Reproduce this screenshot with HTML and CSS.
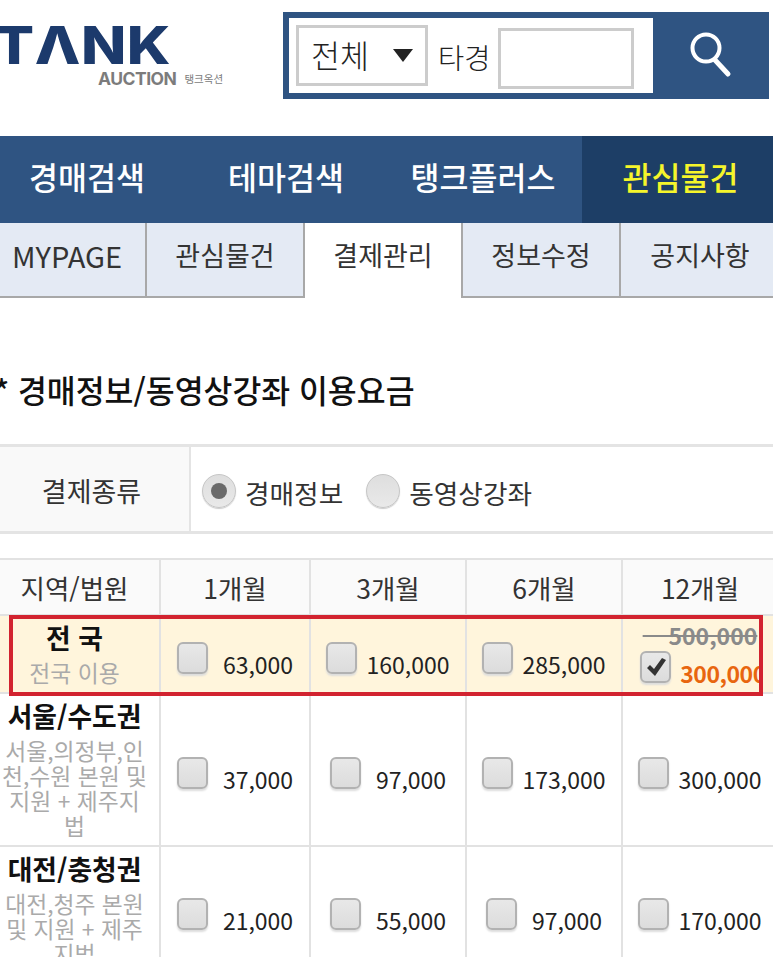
FILE: index.html
```html
<!DOCTYPE html>
<html lang="ko">
<head>
    <meta charset="UTF-8">
    <meta name="viewport" content="width=device-width, initial-scale=1.0">
    <title>결제관리 - 탱크옥션</title>
    <link rel="stylesheet" href="styles.css">
</head>
<body>
<div class="page">
    <header class="top">
        <a class="logo">
            <span class="logo-name">TΛNK</span>
            <span class="logo-sub"><b>AUCTION</b><i>탱크옥션</i></span>
        </a>
        <form class="search">
            <div class="search-fields">
                <div class="select">전체<span class="arrow"></span></div>
                <label class="search-label">타경</label>
                <input class="search-input" type="text">
            </div>
            <div class="search-btn">
                <svg width="44" height="48" viewBox="0 0 44 48" fill="none" stroke="#fff" stroke-width="4">
                    <circle cx="17" cy="17" r="13.5"/>
                    <path d="M26 29 L39 43" stroke-width="5" stroke-linecap="round"/>
                </svg>
            </div>
        </form>
    </header>

    <nav class="nav">
        <a class="nav-item n1">경매검색</a>
        <a class="nav-item n2">테마검색</a>
        <a class="nav-item n3">탱크플러스</a>
        <a class="nav-item n4 on">관심물건</a>
    </nav>

    <div class="tabs">
        <a class="tab tab-en">MYPAGE</a>
        <a class="tab">관심물건</a>
        <a class="tab active">결제관리</a>
        <a class="tab">정보수정</a>
        <a class="tab">공지사항</a>
    </div>

    <h2 class="title">* 경매정보/동영상강좌 이용요금</h2>

    <div class="pay-type">
        <div class="pay-label">결제종류</div>
        <div class="pay-options">
            <span class="radio checked"></span><span class="radio-text">경매정보</span>
            <span class="radio"></span><span class="radio-text">동영상강좌</span>
        </div>
    </div>

    <div class="price-wrap">
        <table class="price">
            <colgroup>
                <col class="c-area"><col class="c1"><col class="c2"><col class="c2"><col class="c2">
            </colgroup>
            <thead>
                <tr>
                    <th>지역/법원</th><th>1개월</th><th>3개월</th><th>6개월</th><th>12개월</th>
                </tr>
            </thead>
            <tbody>
                <tr class="hl">
                    <td class="area"><strong>전 국</strong><p>전국 이용</p></td>
                    <td><span class="chk"></span><span class="amt short">63,000</span></td>
                    <td><span class="chk"></span><span class="amt">160,000</span></td>
                    <td><span class="chk"></span><span class="amt">285,000</span></td>
                    <td class="sale">
                        <s class="old">&nbsp;&nbsp;&nbsp;&nbsp;500,000</s>
                        <span class="chk on">
                            <svg width="22" height="22" viewBox="0 0 22 22"><path d="M2 12 L5 9 L9 13 L17 2 L21 4 L10 20 Z" fill="#333"/></svg>
                        </span><span class="amt now">300,000</span>
                    </td>
                </tr>
                <tr>
                    <td class="area"><strong>서울/수도권</strong><p>서울,의정부,인천,수원 본원 및 지원 + 제주지법</p></td>
                    <td><span class="chk"></span><span class="amt short">37,000</span></td>
                    <td><span class="chk"></span><span class="amt short">97,000</span></td>
                    <td><span class="chk"></span><span class="amt">173,000</span></td>
                    <td><span class="chk"></span><span class="amt">300,000</span></td>
                </tr>
                <tr>
                    <td class="area"><strong>대전/충청권</strong><p>대전,청주 본원 및 지원 + 제주지법</p></td>
                    <td><span class="chk"></span><span class="amt short">21,000</span></td>
                    <td><span class="chk"></span><span class="amt short">55,000</span></td>
                    <td><span class="chk"></span><span class="amt short">97,000</span></td>
                    <td><span class="chk"></span><span class="amt">170,000</span></td>
                </tr>
            </tbody>
        </table>
        <div class="red-box"></div>
    </div>
</div>
</body>
</html>
```

FILE: styles.css
```css
* { box-sizing: border-box; }
html, body { margin: 0; padding: 0; }
body {
    font-family: "Noto Sans CJK KR", "Noto Sans", sans-serif;
    background: #fff;
    color: #333;
}
.page {
    width: 773px;
    height: 957px;
    overflow: hidden;
}

/* top */
.top {
    height: 136px;
    padding: 12px 4px 0 0;
    display: flex;
    justify-content: space-between;
    align-items: flex-start;
}
.logo { display: block; margin-left: -6px; padding-top: 11px; }
.logo-name {
    display: block;
    font-family: Inter, sans-serif;
    font-weight: 800;
    font-size: 52px;
    line-height: 46px;
    letter-spacing: 0.5px;
    color: #1c3a6c;
    transform: scaleX(1.14);
    transform-origin: left center;
}
.logo-sub {
    display: flex;
    align-items: center;
    margin: 0 0 0 104px;
    color: #7c7c7c;
    line-height: 20px;
}
.logo-sub b { font-family: Inter, sans-serif; font-size: 17.5px; letter-spacing: -0.5px; }
.logo-sub i { font-style: normal; font-size: 10.5px; margin-left: 8px; }

.search {
    width: 486px;
    height: 87px;
    background: #2f5482;
    padding: 6px 0 6px 6px;
    display: flex;
}
.search-fields {
    width: 364px;
    background: #fff;
    display: flex;
    padding: 7px 0 0 7px;
}
.select {
    width: 132px;
    height: 61px;
    border: 3px solid #ccc;
    font-size: 31.5px;
    font-weight: 300;
    line-height: 53px;
    padding-left: 12px;
    color: #222;
    position: relative;
}
.arrow {
    position: absolute;
    left: 94px;
    top: 21px;
    border-style: solid;
    border-width: 13px 10px 0;
    border-color: #222 transparent transparent;
}
.search-label {
    font-size: 28.5px;
    font-weight: 300;
    line-height: 64px;
    width: 70px;
    padding-left: 10px;
    color: #222;
}
.search-input {
    width: 136px;
    height: 61px;
    margin: 3px 0 0 0;
    border: 3px solid #ccc;
    background: #fff;
    outline: none;
}
.search-btn {
    flex: 1;
    display: flex;
    justify-content: center;
    padding-top: 13px;
}

/* main menu */
.nav {
    display: flex;
    height: 87px;
    background: #2f5482;
}
.nav-item {
    height: 87px;
    font-size: 31.5px;
    font-weight: 500;
    line-height: 80px;
    text-align: center;
    color: #fff;
    white-space: nowrap;
}
.n1 { width: 174px; }
.n2 { width: 224px; }
.n3 { width: 184px; padding-right: 14px; }
.n4 { width: 191px; padding-left: 6px; }
.nav-item.on { background: #1d3e66; color: #f5f52b; }

/* sub tabs */
.tabs {
    display: flex;
    width: 790px;
    margin-left: -11px;
    height: 75px;
}
.tab {
    width: 158px;
    background: #e4eaf4;
    border-right: 2px solid #a8a8a8;
    border-bottom: 2px solid #a8a8a8;
    font-size: 27px;
    line-height: 64px;
    text-align: center;
    color: #333;
}
.tab-en { font-size: 29px; }
.tab:last-child { border-right: 0; }
.tab.active { background: #fff; border-bottom: 0; }

.title {
    margin: 71px 0 0 -6px;
    height: 72px;
    font-size: 31.4px;
    font-weight: 500;
    line-height: 42px;
    color: #111;
    white-space: nowrap;
}

/* payment type */
.pay-type {
    display: flex;
    height: 90px;
    margin-top: 3px;
    border-top: 3px solid #e4e4e4;
    border-bottom: 3px solid #e4e4e4;
}
.pay-label {
    width: 191px;
    background: #f9f9f9;
    border-right: 2px solid #e4e4e4;
    font-size: 27px;
    line-height: 88px;
    text-align: center;
    padding-right: 6px;
}
.pay-options {
    flex: 1;
    display: flex;
    align-items: center;
    padding: 3px 0 0 11px;
    font-size: 26.7px;
}
.radio {
    width: 34px;
    height: 34px;
    border-radius: 50%;
    background: linear-gradient(#dedede, #e9e9e9);
    border: 1px solid #c6c6c6;
    box-shadow: 0 1px 1px #ccc;
    position: relative;
}
.radio.checked::after {
    content: "";
    position: absolute;
    left: 8px;
    top: 8px;
    width: 16px;
    height: 16px;
    border-radius: 50%;
    background: #6a6a6a;
}
.radio-text { margin: 4px 23px 0 9px; }

/* price table */
.price-wrap {
    position: relative;
    margin-top: 24px;
}
.price {
    width: 788px;
    margin-left: -10px;
    table-layout: fixed;
    border-collapse: collapse;
}
.c-area { width: 170px; }
.c1 { width: 150px; }
.c2 { width: 156px; }
.price th {
    height: 56px;
    background: #fafafa;
    border: 2px solid #e2e2e2;
    border-left: 0;
    font-size: 26.5px;
    font-weight: 400;
    color: #333;
    padding: 0;
}
.price td {
    border: 2px solid #e2e2e2;
    border-left: 0;
    padding: 14px 0 0;
    text-align: center;
    white-space: nowrap;
}
.price tr.hl td { background: #fff5dc; }
.price td.area {
    white-space: normal;
    word-break: break-all;
    padding: 5px 12px 7px;
}
.price td.sale { padding: 0; }
.area strong {
    display: block;
    font-size: 26.8px;
    font-weight: 700;
    line-height: 34px;
    color: #111;
}
.area p {
    margin: 5px 0 0;
    font-size: 22.8px;
    line-height: 25px;
    color: #aaa;
}
.chk {
    display: inline-block;
    width: 31px;
    height: 32px;
    border: 2px solid #b2b2b2;
    border-radius: 6px;
    background: linear-gradient(#e8e8e8, #dcdcdc);
    box-shadow: 0 2px 2px #ddd;
    margin-right: 9px;
}
.chk.on { margin-left: 6px; }
.chk svg { display: block; margin: 3px 0 0 3px; }
.amt {
    font-size: 23px;
    color: #222;
}
.amt.short { margin-left: 6px; }
.old {
    display: block;
    font-size: 23px;
    font-weight: 700;
    line-height: 32px;
    color: #8a8a8a;
}
.amt.now {
    display: inline-block;
    font-weight: 700;
    letter-spacing: -0.5px;
    color: #e8660f;
    clip-path: inset(0 6px 0 0);
}

.red-box {
    position: absolute;
    left: 9px;
    top: 57px;
    width: 754px;
    height: 81px;
    border: 4px solid #d2232f;
}
```
